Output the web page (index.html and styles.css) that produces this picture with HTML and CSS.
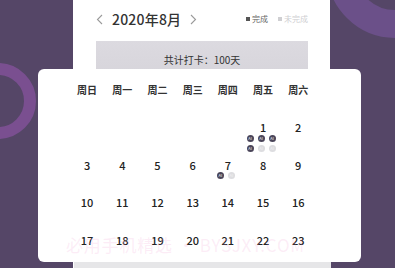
FILE: index.html
```html
<!DOCTYPE html>
<html>
<head>
    <meta charset="UTF-8">
    <title>打卡日历</title>
    <link rel="stylesheet" href="styles.css">
</head>
<body>
    <div class="ring ring-top"></div>
    <div class="ring ring-left"></div>

    <div class="panel">
        <div class="month-bar">
            <div class="month-nav">
                <svg class="chev" width="7" height="11" viewBox="0 0 7 11"><path d="M6 1 L1.5 5.5 L6 10" fill="none" stroke="#9a9a9a" stroke-width="1.1"/></svg>
                <span class="month-title">2020年8月</span>
                <svg class="chev" width="7" height="11" viewBox="0 0 7 11"><path d="M1 1 L5.5 5.5 L1 10" fill="none" stroke="#9a9a9a" stroke-width="1.1"/></svg>
            </div>
            <div class="legend">
                <span class="legend-item done"><i></i>完成</span>
                <span class="legend-item todo"><i></i>未完成</span>
            </div>
        </div>
        <div class="summary">共计打卡：100天</div>
        <div class="spacer"></div>
        <div class="panel-foot"></div>
    </div>

    <div class="calendar">
        <div class="week-head">
            <span>周日</span><span>周一</span><span>周二</span><span>周三</span><span>周四</span><span>周五</span><span>周六</span>
        </div>
        <div class="days">
            <div class="day"></div>
            <div class="day"></div>
            <div class="day"></div>
            <div class="day"></div>
            <div class="day"></div>
            <div class="day">
                <span class="num">1</span>
                <div class="dots">
                    <i class="dot on">AI</i><i class="dot on">AI</i><i class="dot on">AI</i>
                    <i class="dot on">AI</i><i class="dot">AI</i><i class="dot">AI</i>
                </div>
            </div>
            <div class="day"><span class="num">2</span></div>

            <div class="day"><span class="num">3</span></div>
            <div class="day"><span class="num">4</span></div>
            <div class="day"><span class="num">5</span></div>
            <div class="day"><span class="num">6</span></div>
            <div class="day">
                <span class="num">7</span>
                <div class="dots">
                    <i class="dot on">AI</i><i class="dot">AI</i>
                </div>
            </div>
            <div class="day"><span class="num">8</span></div>
            <div class="day"><span class="num">9</span></div>

            <div class="day"><span class="num">10</span></div>
            <div class="day"><span class="num">11</span></div>
            <div class="day"><span class="num">12</span></div>
            <div class="day"><span class="num">13</span></div>
            <div class="day"><span class="num">14</span></div>
            <div class="day"><span class="num">15</span></div>
            <div class="day"><span class="num">16</span></div>

            <div class="day"><span class="num">17</span></div>
            <div class="day"><span class="num">18</span></div>
            <div class="day"><span class="num">19</span></div>
            <div class="day"><span class="num">20</span></div>
            <div class="day"><span class="num">21</span></div>
            <div class="day"><span class="num">22</span></div>
            <div class="day"><span class="num">23</span></div>
        </div>
    </div>

    <div class="watermark">必用手机精选 · BYSJXY.COM</div>
</body>
</html>
```

FILE: styles.css
```css
:root {
    --bg: #554667;
    --ring: #6b5089;
    --ring-left: #7a4f90;
    --text: #2b2b2b;
    --muted: #666;
    --faint: #cfcfd2;
    --dot-on: #4a4559;
    --dot-off: #dddde0;
}
html, body { margin: 0; padding: 0; }
body {
    width: 395px;
    height: 268px;
    overflow: hidden;
    position: relative;
    background-color: var(--bg);
    font-family: "Noto Sans CJK SC", "Noto Sans", sans-serif;
    color: var(--text);
}

/* background decorations */
.ring { position: absolute; box-sizing: border-box; border-radius: 50%; }
.ring-top { left: 327px; top: -98px; width: 136px; height: 136px; border: 28px solid var(--ring); }
.ring-left { left: -40px; top: 63px; width: 76px; height: 76px; border: 12px solid var(--ring-left); }

/* page behind the popup */
.panel {
    position: relative;
    margin-left: 73px;
    width: 257px;
    height: 268px;
    background-color: #fff;
    box-sizing: border-box;
    padding: 9px 22px 0 23px;
    display: flex;
    flex-direction: column;
}
.month-bar { display: flex; align-items: center; justify-content: space-between; height: 20px; }
.month-nav { display: flex; align-items: center; gap: 9px; }
.chev { display: block; }
.month-title { font-size: 14px; font-weight: 500; color: #333; line-height: 20px; letter-spacing: 0.2px; }
.legend { display: flex; gap: 10px; font-size: 8px; line-height: 12px; }
.legend-item { display: flex; align-items: center; gap: 2px; }
.legend-item i { display: block; width: 4px; height: 4px; }
.done { color: var(--muted); }
.done i { background-color: #555; }
.todo { color: var(--faint); }
.todo i { background-color: var(--faint); }
.summary {
    margin-top: 12px;
    height: 38px;
    line-height: 38px;
    text-align: center;
    font-size: 10px;
    color: #333;
    background: linear-gradient(#dcdae0, #d6d4da);
}
.spacer { flex-grow: 1; }
.panel-foot { height: 6px; margin: 0 -23px 0 -22px; background-color: #e6e6e8; }

/* calendar popup */
.calendar {
    position: absolute;
    left: 38px;
    top: 69px;
    width: 323px;
    height: 193px;
    box-sizing: border-box;
    padding: 11px 0 0 31.5px;
    background-color: #fff;
    border-radius: 6px;
}
.week-head, .days { display: grid; grid-template-columns: repeat(7, 35.2px); }
.week-head { height: 20px; line-height: 20px; margin-bottom: 20px; }
.week-head span { text-align: center; font-size: 10px; font-weight: 700; color: #333; }
.days { grid-auto-rows: 37.5px; }
.day { display: flex; flex-direction: column; align-items: center; }
.num { font-size: 11px; line-height: 14px; font-weight: 500; color: #222; }
.dots {
    display: flex;
    flex-wrap: wrap;
    justify-content: center;
    gap: 3px 4px;
    width: 29px;
    margin-top: 0.5px;
    margin-left: -4px;
}
.dot {
    display: block;
    width: 7px;
    height: 7px;
    border-radius: 50%;
    background-color: var(--dot-off);
    color: #f2f2f4;
    font-style: normal;
    font-size: 4px;
    line-height: 7px;
    text-align: center;
    overflow: hidden;
}
.dot.on { background-color: var(--dot-on); color: #fff; }

.watermark {
    position: absolute;
    left: 66px;
    top: 234px;
    font-size: 17px;
    letter-spacing: 0.8px;
    line-height: 22px;
    color: rgba(244, 170, 215, 0.22);
    white-space: nowrap;
}
```
